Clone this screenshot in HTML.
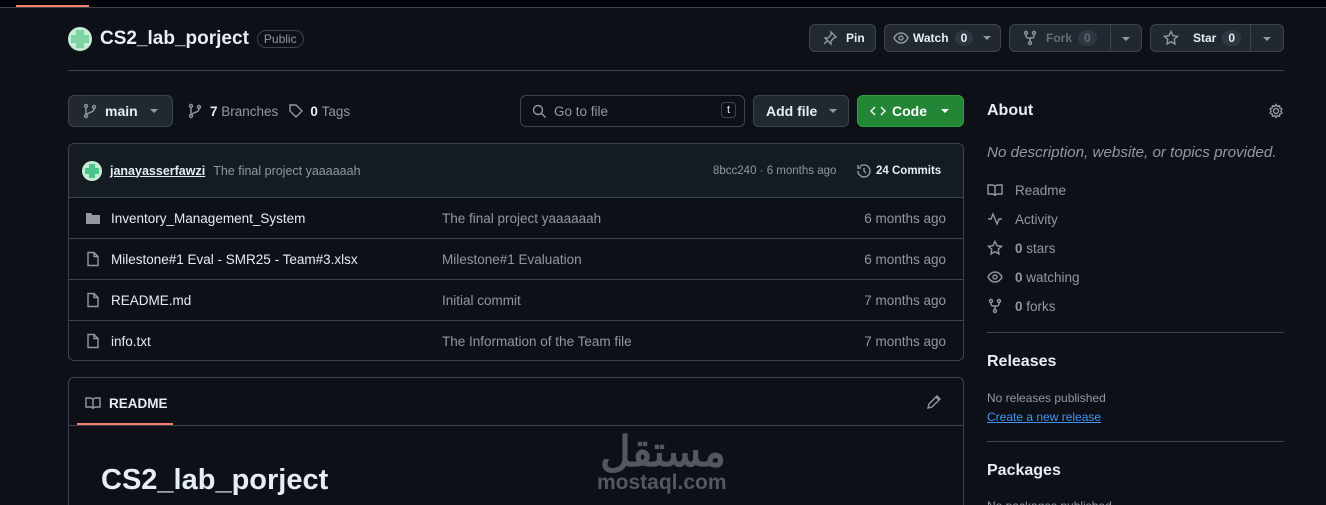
<!DOCTYPE html>
<html><head><meta charset="utf-8"><style>
*{box-sizing:border-box;margin:0;padding:0}
html,body{width:1326px;height:505px;overflow:hidden}
body{background:#0d1117;color:#e6edf3;font-family:"Liberation Sans","Noto Sans CJK SC",sans-serif;font-size:13.5px;position:relative}
.a{position:absolute}
.btn{position:absolute;height:28px;border:1px solid #3d444d;background:#212830;border-radius:6px;display:flex;align-items:center;font-size:12px;font-weight:bold;color:#e6edf3}
.cnt{display:inline-block;background:#2f3742;border-radius:10px;padding:1px 6px;font-size:12px;margin-left:6px}
.caret{width:0;height:0;border-left:4px solid transparent;border-right:4px solid transparent;border-top:4px solid #9198a1;display:inline-block}
svg{fill:none;stroke:#9198a1;stroke-width:1.4}
.row{position:absolute;left:0;right:0;height:41px;border-top:1px solid #3d444d;display:flex;align-items:center;font-size:13.5px}
.muted{color:#9198a1}
.side{position:absolute;left:987px;display:flex;align-items:center;color:#9198a1;font-size:13.5px}
.side svg{margin-right:12px}
</style></head><body>
<div class="a" style="left:0;top:0;width:1326px;height:8px;background:#010409;border-bottom:1px solid #3d444d"></div>
<div class="a" style="left:16px;top:5px;width:73px;height:2px;background:#f78166"></div>

<div class="a" style="left:68px;top:27px;width:24px;height:24px;border-radius:50%;background:#c6ecd6;overflow:hidden">
<div class="a" style="left:8px;top:3px;width:8px;height:18px;background:#7dd3a3"></div><div class="a" style="left:3px;top:8px;width:18px;height:8px;background:#7dd3a3"></div></div>
<div class="a" style="left:100px;top:28px;display:flex;align-items:center"><span style="font-size:19px;font-weight:bold">CS2_lab_porject</span><span style="margin-left:8px;border:1px solid #3d444d;border-radius:10px;padding:1px 6px;font-size:12px;color:#9198a1">Public</span></div>

<div class="btn" style="left:809px;top:24px;width:67px;padding-left:12px"><svg width="16" height="16"><path d="M9 2l5 5-2 1-3 3 0 3-6-6 3 0 3-3zM5 11l-3 3"/></svg><span style="margin-left:8px">Pin</span></div>
<div class="btn" style="left:884px;top:24px;width:117px;padding-left:8px"><svg width="16" height="16"><path d="M1 8c2-4 5-5 7-5s5 1 7 5c-2 4-5 5-7 5s-5-1-7-5z"/><circle cx="8" cy="8" r="2"/></svg><span style="margin-left:4px">Watch</span><span class="cnt">0</span><span class="caret" style="margin-left:10px"></span></div>
<div class="btn" style="left:1009px;top:24px;width:133px;padding-left:12px;color:#656c76"><svg width="16" height="16"><circle cx="4" cy="3" r="1.5"/><circle cx="12" cy="3" r="1.5"/><circle cx="8" cy="13" r="1.5"/><path d="M4 5v1c0 1 1 2 2 2h4c1 0 2-1 2-2V5M8 8v3"/></svg><span style="margin-left:8px">Fork</span><span class="cnt" style="color:#656c76">0</span><span style="position:absolute;left:100px;top:0;bottom:0;border-left:1px solid #3d444d"></span><span class="caret" style="position:absolute;left:112px;top:12px"></span></div>
<div class="btn" style="left:1150px;top:24px;width:134px;padding-left:12px"><svg width="16" height="16"><path d="M8 1.5l2 4.2 4.5.6-3.3 3.1.8 4.5L8 11.7 4 13.9l.8-4.5L1.5 6.3 6 5.7z"/></svg><span style="margin-left:14px">Star</span><span class="cnt">0</span><span style="position:absolute;left:99px;top:0;bottom:0;border-left:1px solid #3d444d"></span><span class="caret" style="position:absolute;left:112px;top:12px"></span></div>
<div class="a" style="left:68px;top:70px;width:1216px;height:1px;background:#3d444d"></div>

<div class="btn" style="left:68px;top:95px;width:105px;height:32px;padding-left:13px;font-size:14px"><svg width="16" height="16"><circle cx="4" cy="3" r="1.5"/><circle cx="4" cy="13" r="1.5"/><circle cx="12" cy="4" r="1.5"/><path d="M4 5v6M12 6c0 3-4 3-7 5"/></svg><span style="margin-left:7px">main</span><span class="caret" style="margin-left:12px"></span></div>
<div class="a" style="left:187px;top:103px;display:flex;align-items:center;color:#9198a1"><svg width="16" height="16"><circle cx="4" cy="3" r="1.5"/><circle cx="4" cy="13" r="1.5"/><circle cx="12" cy="4" r="1.5"/><path d="M4 5v6M12 6c0 3-4 3-7 5"/></svg><b style="color:#e6edf3;margin-left:7px">7</b>&nbsp;Branches<svg width="16" height="16" style="margin-left:10px"><path d="M2 2h6l6 6-6 6-6-6zM5 5h.1"/></svg><b style="color:#e6edf3;margin-left:6px">0</b>&nbsp;Tags</div>

<div class="a" style="left:520px;top:95px;width:225px;height:32px;border:1px solid #3d444d;border-radius:6px;display:flex;align-items:center;padding-left:10px;color:#9198a1"><svg width="16" height="16"><circle cx="7" cy="7" r="4.5"/><path d="M10.5 10.5l4 4"/></svg><span style="margin-left:7px">Go to file</span><span style="position:absolute;right:8px;top:6px;border:1px solid #3d444d;border-radius:4px;font-size:11px;padding:1px 5px;color:#e6edf3">t</span></div>
<div class="btn" style="left:753px;top:95px;width:96px;height:32px;padding-left:12px;font-size:14px">Add file<span class="caret" style="margin-left:12px"></span></div>
<div class="btn" style="left:857px;top:95px;width:107px;height:32px;padding-left:12px;font-size:14px;background:#238636;border-color:#2ea043;color:#fff"><svg width="16" height="16" style="stroke:#fff"><path d="M5 4l-4 4 4 4M11 4l4 4-4 4"/></svg><span style="margin-left:6px">Code</span><span class="caret" style="margin-left:14px;border-top-color:#fff"></span></div>

<div class="a" style="left:68px;top:143px;width:896px;height:218px;border:1px solid #3d444d;border-radius:6px;overflow:hidden">
<div class="a" style="left:0;top:0;right:0;height:53px;background:#151b23;display:flex;align-items:center;padding-left:13px">
<div style="width:20px;height:20px;border-radius:50%;background:#c6ecd6;position:relative;overflow:hidden"><div class="a" style="left:7px;top:3px;width:6px;height:14px;background:#4cc38a"></div><div class="a" style="left:3px;top:7px;width:14px;height:6px;background:#4cc38a"></div></div>
<span style="margin-left:8px;font-size:12.5px;font-weight:bold;text-decoration:underline">janayasserfawzi</span>
<span class="muted" style="margin-left:8px;font-size:12.5px">The final project yaaaaaah</span>
<span class="muted" style="position:absolute;left:644px;font-size:11.5px">8bcc240 · 6 months ago</span>
<span style="position:absolute;left:787px;display:flex;align-items:center;font-size:11.5px;font-weight:bold"><svg width="16" height="16"><path d="M2 8a6 6 0 1 0 2-4.5M2 2v3h3M8 5v3l2 2"/></svg><span style="margin-left:4px">24 Commits</span></span>
</div>
<div class="row" style="top:53px;padding-left:16px"><svg width="16" height="16" style="fill:#9198a1;stroke:none"><path d="M1 3h5l1.5 2H15v9H1z"/></svg><span style="margin-left:10px">Inventory_Management_System</span><span class="muted a" style="left:373px">The final project yaaaaaah</span><span class="muted a" style="right:17px">6 months ago</span></div>
<div class="row" style="top:94px;padding-left:16px"><svg width="16" height="16"><path d="M3 1.5h6l4 4v9H3zM9 1.5v4h4"/></svg><span style="margin-left:10px">Milestone#1 Eval - SMR25 - Team#3.xlsx</span><span class="muted a" style="left:373px">Milestone#1 Evaluation</span><span class="muted a" style="right:17px">6 months ago</span></div>
<div class="row" style="top:135px;padding-left:16px"><svg width="16" height="16"><path d="M3 1.5h6l4 4v9H3zM9 1.5v4h4"/></svg><span style="margin-left:10px">README.md</span><span class="muted a" style="left:373px">Initial commit</span><span class="muted a" style="right:17px">7 months ago</span></div>
<div class="row" style="top:176px;padding-left:16px"><svg width="16" height="16"><path d="M3 1.5h6l4 4v9H3zM9 1.5v4h4"/></svg><span style="margin-left:10px">info.txt</span><span class="muted a" style="left:373px">The Information of the Team file</span><span class="muted a" style="right:17px">7 months ago</span></div>
</div>

<div class="a" style="left:68px;top:377px;width:896px;height:140px;border:1px solid #3d444d;border-radius:6px">
<div class="a" style="left:0;right:0;top:47px;height:1px;background:#3d444d"></div>
<div class="a" style="left:16px;top:17px;display:flex;align-items:center;font-size:13.5px;font-weight:bold"><svg width="16" height="16"><path d="M1 3h4c2 0 3 1 3 2v9c0-1-1-2-3-2H1zM15 3h-4c-2 0-3 1-3 2v9c0-1 1-2 3-2h4z"/></svg><span style="margin-left:8px">README</span></div>
<div class="a" style="left:8px;top:45px;width:96px;height:2px;background:#f78166"></div>
<svg class="a" width="16" height="16" style="left:857px;top:16px"><path d="M11 2l3 3-8 8-4 1 1-4zM10 3l3 3"/></svg>
<div class="a" style="left:32px;top:86px;font-size:29px;font-weight:bold">CS2_lab_porject</div>
</div>
<div class="a" style="left:597px;top:428px;width:132px;text-align:center;font-size:42px;font-weight:bold;color:#54585e;line-height:42px;font-family:'Noto Sans CJK SC',sans-serif;direction:rtl">مستقل</div>
<div class="a" style="left:597px;top:471px;font-size:21px;font-weight:bold;color:#54585e">mostaql.com</div>

<div class="a" style="left:987px;top:102px;font-size:16px;font-weight:bold">About</div>
<svg class="a" width="16" height="16" style="left:1268px;top:103px"><circle cx="8" cy="8" r="2.5"/><path d="M8 1.5l1.3 1.8 2.2-.6.4 2.2 2 1-1 2.1 1 2-2 1-.4 2.2-2.2-.6L8 14.5l-1.3-1.9-2.2.6-.4-2.2-2-1 1-2-1-2.1 2-1 .4-2.2 2.2.6z"/></svg>
<div class="a" style="left:987px;top:144px;font-size:15.2px;font-style:italic;color:#9198a1">No description, website, or topics provided.</div>
<div class="side" style="top:182px"><svg width="16" height="16"><path d="M1 3h4c2 0 3 1 3 2v9c0-1-1-2-3-2H1zM15 3h-4c-2 0-3 1-3 2v9c0-1 1-2 3-2h4z"/></svg>Readme</div>
<div class="side" style="top:211px"><svg width="16" height="16"><path d="M1 8h3l2-5 4 10 2-5h3"/></svg>Activity</div>
<div class="side" style="top:240px"><svg width="16" height="16"><path d="M8 1.5l2 4.2 4.5.6-3.3 3.1.8 4.5L8 11.7 4 13.9l.8-4.5L1.5 6.3 6 5.7z"/></svg><b>0</b>&nbsp;stars</div>
<div class="side" style="top:269px"><svg width="16" height="16"><path d="M1 8c2-4 5-5 7-5s5 1 7 5c-2 4-5 5-7 5s-5-1-7-5z"/><circle cx="8" cy="8" r="2"/></svg><b>0</b>&nbsp;watching</div>
<div class="side" style="top:298px"><svg width="16" height="16"><circle cx="4" cy="3" r="1.5"/><circle cx="12" cy="3" r="1.5"/><circle cx="8" cy="13" r="1.5"/><path d="M4 5v1c0 1 1 2 2 2h4c1 0 2-1 2-2V5M8 8v3"/></svg><b>0</b>&nbsp;forks</div>
<div class="a" style="left:987px;top:332px;width:297px;height:1px;background:#3d444d"></div>
<div class="a" style="left:987px;top:353px;font-size:16px;font-weight:bold">Releases</div>
<div class="a" style="left:987px;top:391px;font-size:12px;color:#9198a1">No releases published</div>
<div class="a" style="left:987px;top:410px;font-size:12px;color:#4493f8;text-decoration:underline">Create a new release</div>
<div class="a" style="left:987px;top:441px;width:297px;height:1px;background:#3d444d"></div>
<div class="a" style="left:987px;top:462px;font-size:16px;font-weight:bold">Packages</div>
<div class="a" style="left:987px;top:499px;font-size:12px;color:#9198a1">No packages published</div>
</body></html>
